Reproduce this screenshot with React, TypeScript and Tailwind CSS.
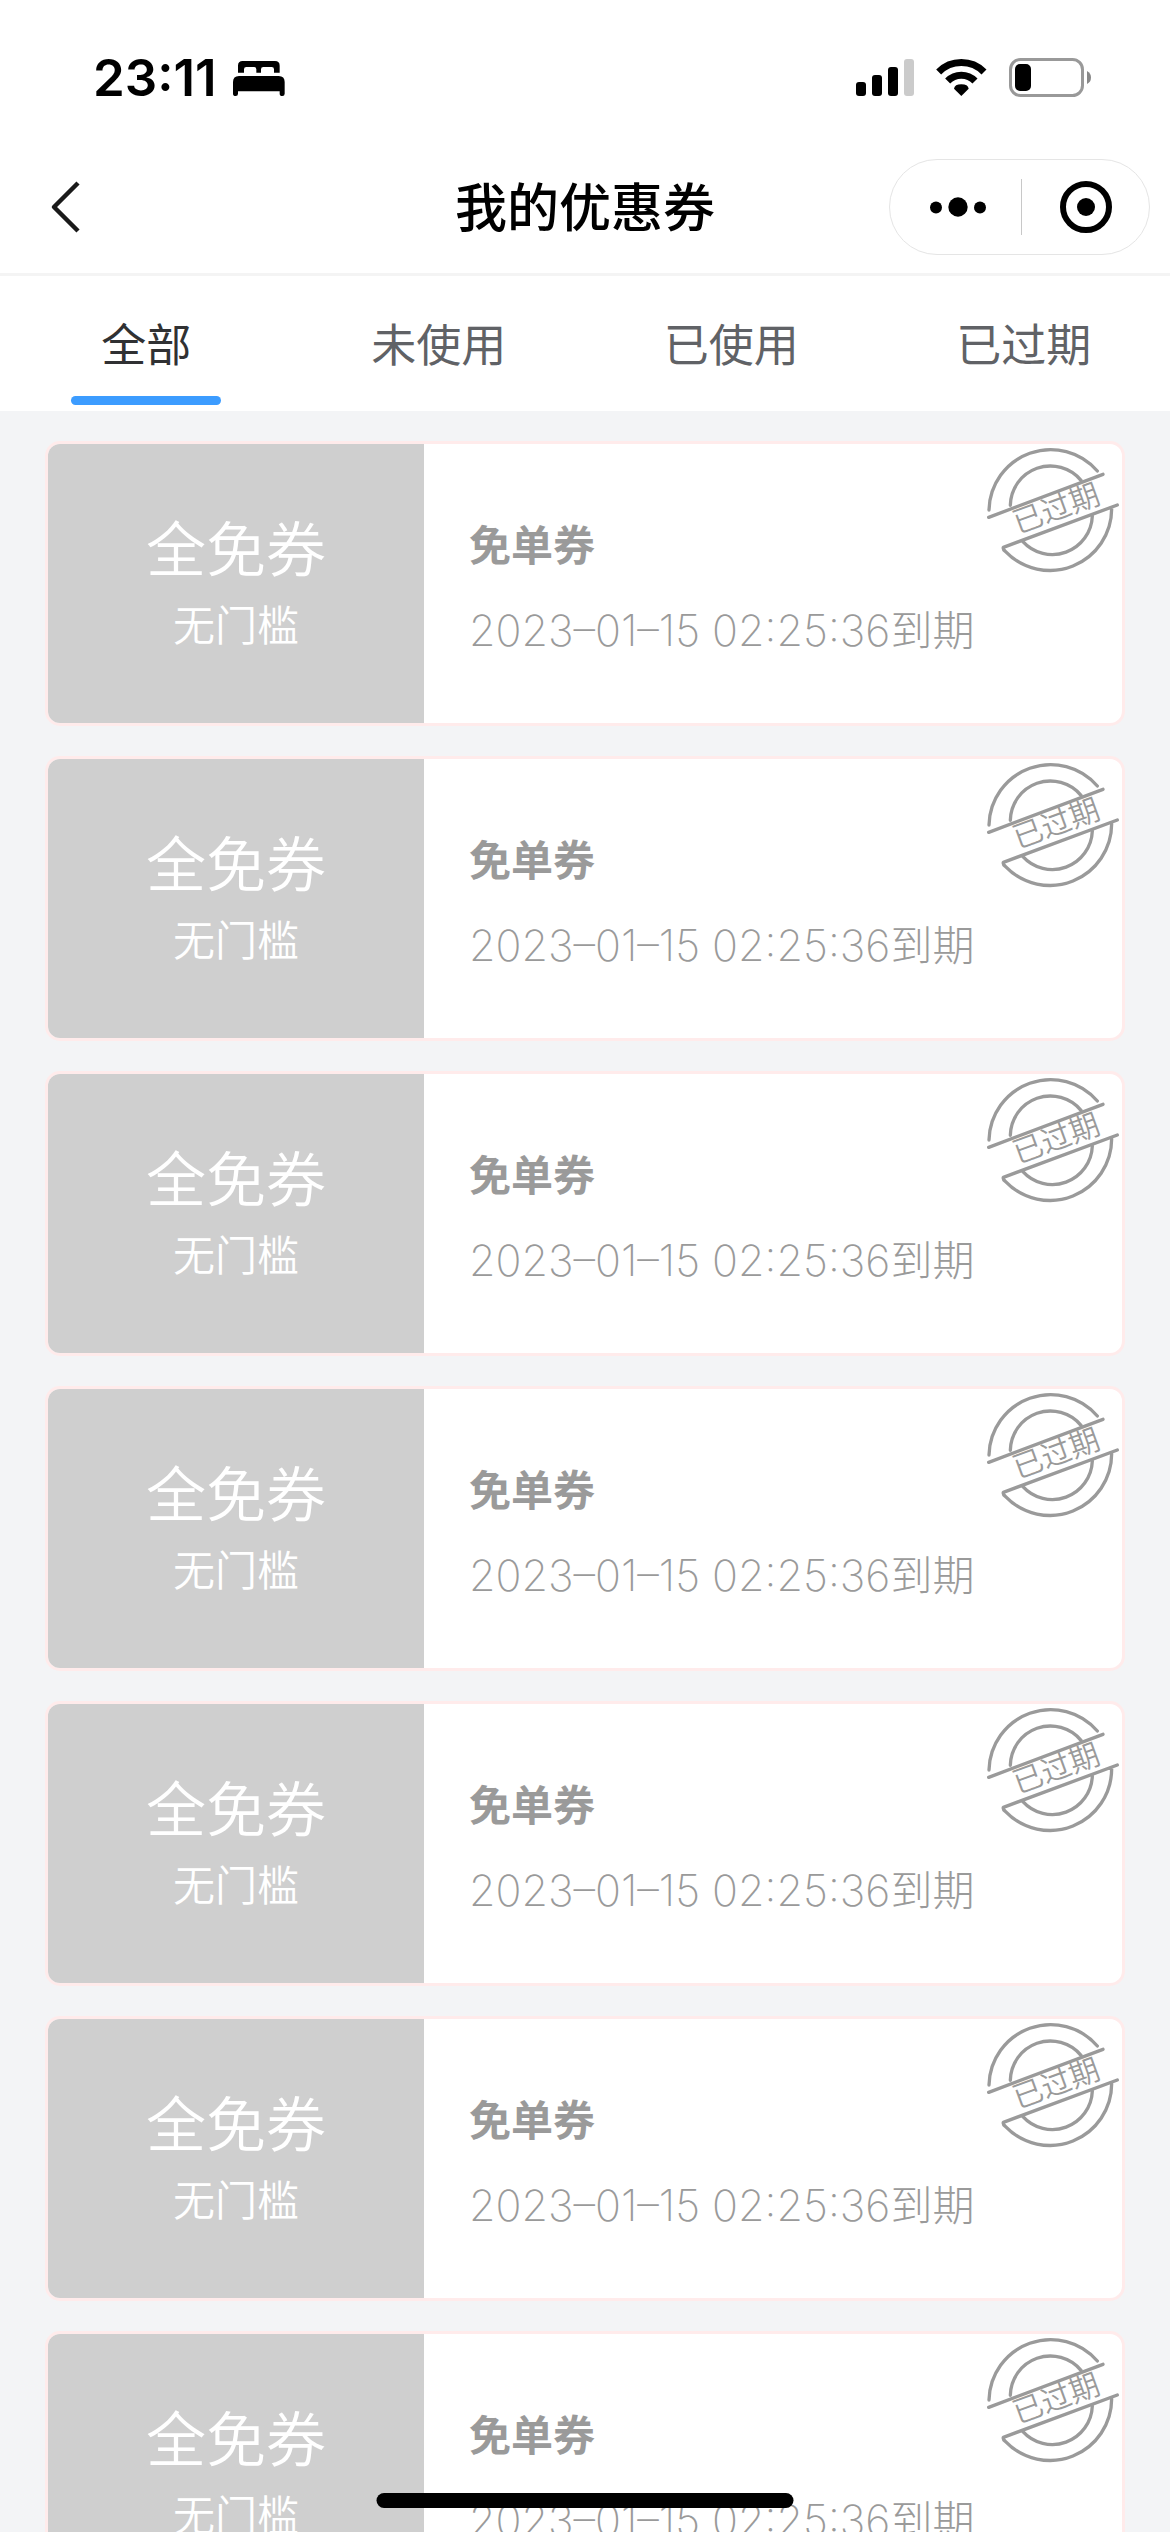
import React, { useState } from "react";

const tabs = ["全部", "未使用", "已使用", "已过期"];

const coupons = Array.from({ length: 7 }, (_, i) => ({
  id: i + 1,
  amount: "全免券",
  limit: "无门槛",
  title: "免单券",
  expire: "2023–01–15 02:25:36",
}));

const BedIcon = () => (
  <svg viewBox="702 90 156 108" className="h-9 w-[52px]" fill="#000">
    <path d="M717 128V107Q717 93 731 93H828Q842 93 842 107V128H825V118Q825 111 818 111H793Q786 111 786 118V128H772V118Q772 111 765 111H742Q735 111 735 118V128Z" />
    <path d="M702 156Q702 138 720 138H839Q857 138 857 156V191Q857 198 850 198Q842 198 842 191V184H717V191Q717 198 710 198Q702 198 702 191Z" />
  </svg>
);

const SignalIcon = () => (
  <svg viewBox="0 0 58 38" className="h-[38px] w-[58px]">
    <rect x="0" y="23" width="10" height="14" rx="3" />
    <rect x="16" y="16" width="10" height="21" rx="3" />
    <rect x="32" y="8" width="10" height="29" rx="3" />
    <rect x="48" y="0" width="10" height="37" rx="3" fill="#cbcbcb" />
  </svg>
);

const WifiIcon = () => (
  <svg viewBox="348 87 153 114" className="h-[38px] w-[51px]" fill="none" stroke="#000" strokeWidth="21">
    <path d="M356 126A96 96 0 0 1 492 126" />
    <path d="M383 153A57 57 0 0 1 465 153" />
    <path d="M424 198L402 176Q404 163 424 163Q444 163 446 176Z" fill="#000" stroke="none" />
  </svg>
);

const BatteryIcon = () => (
  <svg viewBox="0 0 83 40" className="h-10 w-[83px]">
    <rect x="1.5" y="1.5" width="72" height="36" rx="10" fill="none" stroke="#999" strokeWidth="3" />
    <rect x="6" y="6" width="16" height="27" rx="5" />
    <path d="M78 13Q82 15 82 19.500Q82 24 78 26Z" fill="#888" />
  </svg>
);

// round "expired" stamp in the card corner
const Stamp = () => (
  <svg
    viewBox="72 42 414 396"
    className="absolute top-0 right-0 h-[132px] w-[138px]"
    fill="none"
    stroke="#9a9a9a"
    strokeWidth="10"
    strokeLinecap="round"
    strokeLinejoin="round"
  >
    <path d="M87 240A185 185 0 0 1 412 123" />
    <path d="M151 226A120 120 0 0 1 363 151" />
    <path d="M86 262L429 133" />
    <path d="M472 225L130 352Q128 358 136 364A185 185 0 0 0 455 236" />
    <path d="M188 334A120 120 0 0 0 397 258" />
    <text
      x="288"
      y="234"
      transform="rotate(-20 288 234)"
      textAnchor="middle"
      dominantBaseline="central"
      fontSize="90"
      fontWeight="350"
      fill="#9a9a9a"
      stroke="none"
    >
      已过期
    </text>
  </svg>
);

const CouponCard = ({ coupon }: { coupon: (typeof coupons)[number] }) => {
  return (
    <li className="relative flex shrink-0 overflow-hidden rounded-[15px] border-3 border-[#ffebeb] bg-white">
      <div className="flex w-[35%] flex-col items-center bg-[#cfcfcf] pt-[62px] pb-[65px] font-[350] text-white">
        <p className="text-[60px] leading-[88px]">{coupon.amount}</p>
        <p className="text-[42px] leading-[64px]">{coupon.limit}</p>
      </div>
      <div className="flex flex-1 flex-col justify-center gap-5 pt-2.5 pl-[45px] text-[42px] leading-[64px] text-[#9a9a9a]">
        <h2 className="font-bold">{coupon.title}</h2>
        <p className="font-light">
          <span className="text-[43px] font-extralight">{coupon.expire}</span>到期
        </p>
      </div>
      <Stamp />
    </li>
  );
};

export default function App() {
  const [active, setActive] = useState(0);

  return (
    <div className="flex h-screen flex-col bg-[#f3f4f6] font-[Inter,'Noto_Sans_CJK_SC',sans-serif]">
      <header className="border-b-3 border-[#f4f4f4] bg-white">
        {/* status bar */}
        <div className="flex h-[141px] items-center justify-between pt-3.5 pr-[78px] pl-[93px]">
          <div className="flex items-center gap-4">
            <span className="text-[51px] leading-[60px] font-semibold text-black">23:11</span>
            <BedIcon />
          </div>
          <div className="flex items-center gap-[22px]">
            <SignalIcon />
            <WifiIcon />
            <BatteryIcon />
          </div>
        </div>

        {/* nav bar */}
        <div className="grid h-[132px] grid-cols-[1fr_auto_1fr] items-center px-5">
          <button type="button" aria-label="返回" className="justify-self-start pl-7">
            <svg viewBox="0 0 36 60" className="h-[60px] w-9" fill="none" stroke="#1a1a1a" strokeWidth="4.500" strokeLinejoin="round">
              <path d="M30 6L6 30L30 54" />
            </svg>
          </button>
          <h1 className="pt-1 text-[52px] leading-[72px] font-medium text-black">我的优惠券</h1>
          <div className="flex h-24 w-[261px] items-center justify-self-end rounded-full border border-[#e5e5e5]">
            <button type="button" aria-label="更多" className="flex flex-1 justify-center pl-1">
              <svg viewBox="0 0 56 20" className="h-5 w-14">
                <circle cx="6" cy="10.500" r="6" />
                <circle cx="28" cy="10" r="9.700" />
                <circle cx="50" cy="10.500" r="6" />
              </svg>
            </button>
            <span className="h-14 w-px bg-[#c8c8c8]" />
            <button type="button" aria-label="关闭" className="flex flex-1 justify-center">
              <svg viewBox="0 0 52 52" className="size-[52px]">
                <circle cx="26" cy="26" r="23" fill="none" stroke="#000" strokeWidth="6" />
                <circle cx="26" cy="26" r="9" />
              </svg>
            </button>
          </div>
        </div>
      </header>

      <nav className="flex bg-white">
        {tabs.map((tab, i) => (
          <button
            key={tab}
            type="button"
            onClick={() => setActive(i)}
            className={
              "flex flex-1 flex-col items-center gap-[18px] pt-[38px] pb-1.5 text-[45px] leading-[64px] " +
              (i === active ? "text-[#303133]" : "text-[#606266]")
            }
          >
            {tab}
            <span className={"h-[9px] w-[150px] rounded-full " + (i === active ? "bg-[#3c9cff]" : "bg-transparent")} />
          </button>
        ))}
      </nav>

      <ul className="flex min-h-0 flex-1 flex-col gap-[30px] overflow-y-auto px-[45px] py-[30px] [scrollbar-width:none]">
        {coupons.map((coupon) => (
          <CouponCard key={coupon.id} coupon={coupon} />
        ))}
      </ul>

      {/* home indicator */}
      <div className="fixed bottom-6 left-1/2 h-[15px] w-[417px] -translate-x-1/2 rounded-full bg-black" />
    </div>
  );
}
